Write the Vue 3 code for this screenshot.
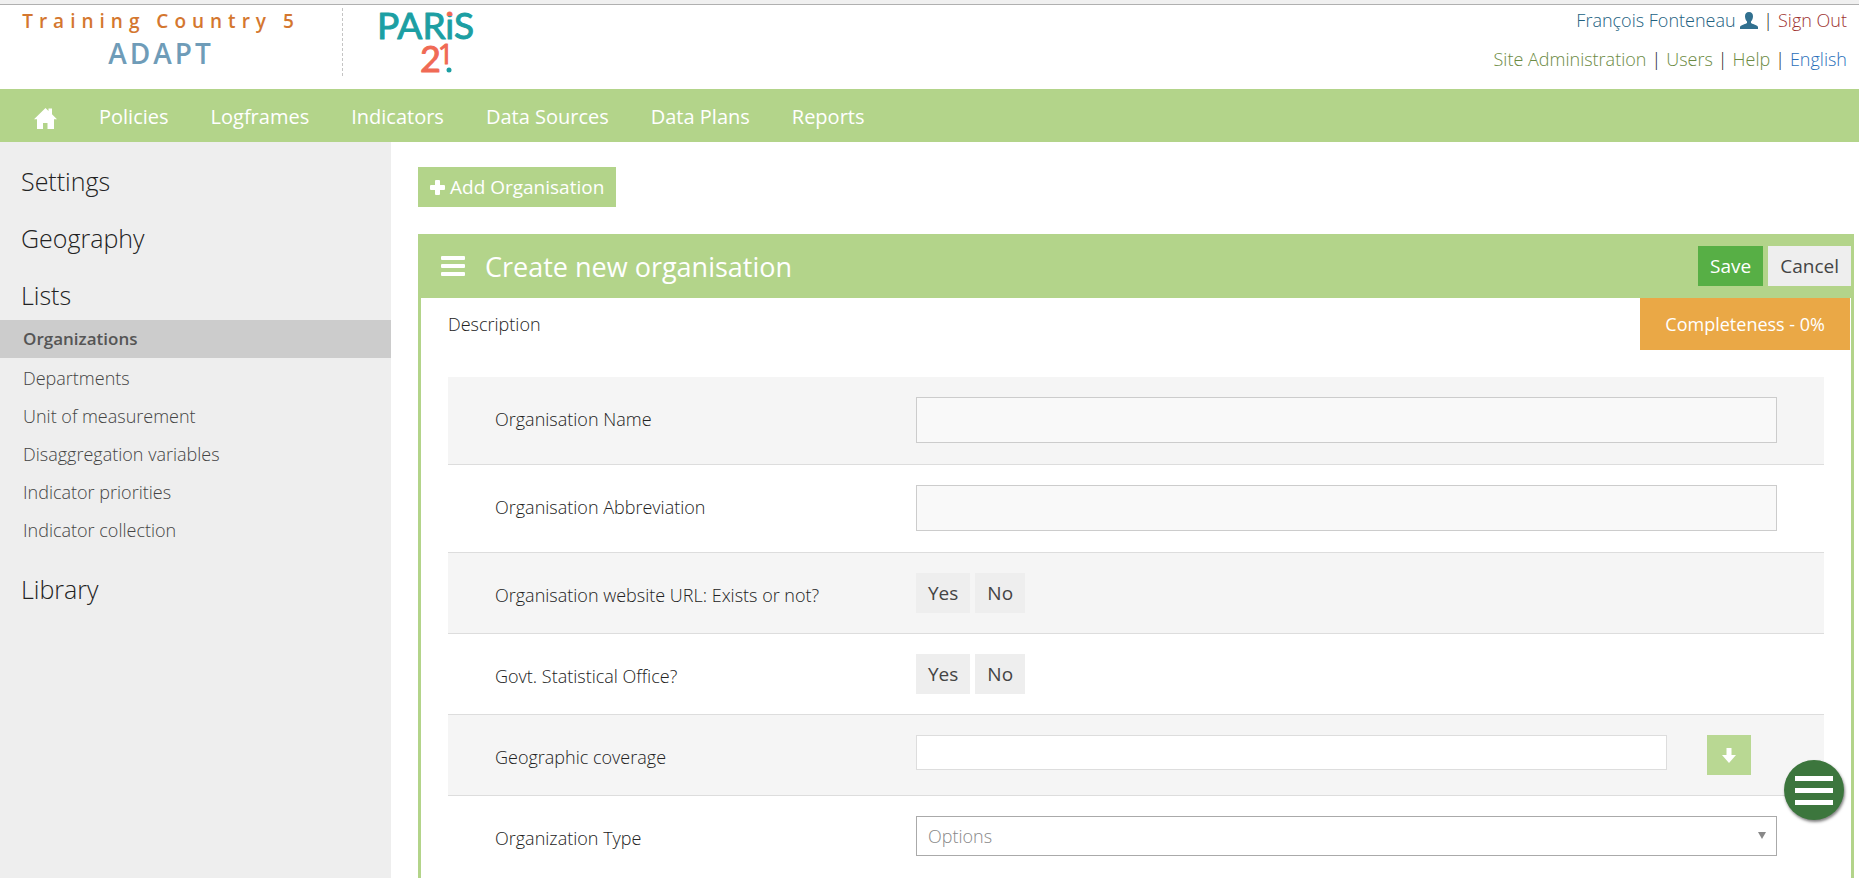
<script setup>
import { ref } from 'vue'

const navItems = ['Policies', 'Logframes', 'Indicators', 'Data Sources', 'Data Plans', 'Reports']
const listItems = [
  'Organizations',
  'Departments',
  'Unit of measurement',
  'Disaggregation variables',
  'Indicator priorities',
  'Indicator collection',
]
const activeItem = 'Organizations'

const organisationName = ref('')
const abbreviation = ref('')
const coverage = ref('')
const organisationType = ref('')
const hasWebsite = ref(null)
const isStatOffice = ref(null)
</script>

<template>
  <div class="page">
    <header class="top">
      <div class="brand">
        <div class="country">Training Country 5</div>
        <div class="product">ADAPT</div>
      </div>
      <a class="logo" href="#" aria-label="PARIS21">
        <svg width="110" height="76" viewBox="0 0 110 76">
          <defs>
            <linearGradient id="letter-dot" gradientUnits="userSpaceOnUse" x1="0" y1="0" x2="0" y2="20">
              <stop offset="0.570" stop-color="#f06a55" />
              <stop offset="0.570" stop-color="#1c9fa3" />
            </linearGradient>
          </defs>
          <text class="teal" x="1" y="34" font-size="37">PAR<tspan class="dotted">i</tspan>S</text>
          <text class="red" x="44" y="67" font-size="36">2</text>
          <text class="red one" x="62" y="59" font-size="27">1</text>
          <circle cx="73" cy="65" r="2.500" fill="#1c9fa3" />
        </svg>
      </a>
      <div class="account">
        <div class="account-line">
          <a class="user" href="#">François Fonteneau
            <svg class="user-icon" width="18" height="17" viewBox="0 0 18 17">
              <path d="M9 0C6.300 0 5 1.800 5 4.300c0 2.200.8 4.200 2 5.200v1.600c-.6 1-6 1.700-7 3.800V17h18v-2.100c-1-2.100-6.400-2.800-7-3.800V9.500c1.200-1 2-3 2-5.200C13 1.800 11.700 0 9 0z" fill="#31708f" />
            </svg></a>
          <span class="bar">|</span>
          <a class="signout" href="#">Sign Out</a>
        </div>
        <div class="account-line">
          <a class="green" href="#">Site Administration</a>
          <span class="bar">|</span>
          <a class="green" href="#">Users</a>
          <span class="bar">|</span>
          <a class="green" href="#">Help</a>
          <span class="bar">|</span>
          <a class="lang" href="#">English</a>
        </div>
      </div>
    </header>

    <nav class="nav">
      <a class="home" href="#" aria-label="Home">
        <svg width="23" height="21" viewBox="0 0 23 21">
          <path d="M11.500 0 0 11.300h3V21h6v-6h4.500v6H20v-9.700h3L18 6.300V0.500h-3.500v2.600z" fill="#fff" />
        </svg>
      </a>
      <a v-for="item in navItems" :key="item" href="#">{{ item }}</a>
    </nav>

    <div class="body">
      <aside class="side">
        <h2><a href="#">Settings</a></h2>
        <h2><a href="#">Geography</a></h2>
        <h2><a href="#">Lists</a></h2>
        <ul>
          <li v-for="item in listItems" :key="item" :class="{ active: item === activeItem }">
            <a href="#">{{ item }}</a>
          </li>
        </ul>
        <h2><a href="#">Library</a></h2>
      </aside>

      <main class="main">
        <button class="btn add" type="button">
          <svg width="15" height="15" viewBox="0 0 15 15">
            <path d="M6 0h3q1 0 1 1v4h4q1 0 1 1v3q0 1-1 1h-4v4q0 1-1 1h-3q-1 0-1-1v-4h-4q-1 0-1-1v-3q0-1 1-1h4v-4q0-1 1-1z" fill="#fff" />
          </svg>
          Add Organisation
        </button>

        <form class="panel" @submit.prevent>
          <div class="panel-head">
            <svg width="24" height="20" viewBox="0 0 24 20">
              <g fill="#fff">
                <rect width="24" height="4" rx="1" />
                <rect y="8" width="24" height="4" rx="1" />
                <rect y="16" width="24" height="4" rx="1" />
              </g>
            </svg>
            <h1>Create new organisation</h1>
            <div class="actions">
              <button class="btn save" type="submit">Save</button>
              <button class="btn" type="button">Cancel</button>
            </div>
          </div>

          <div class="panel-sub">
            <span>Description</span>
            <span class="complete">Completeness - 0%</span>
          </div>

          <div class="rows">
            <div class="row">
              <label class="label" for="org-name">Organisation Name</label>
              <input id="org-name" v-model="organisationName" class="field" type="text" />
            </div>
            <div class="row">
              <label class="label" for="org-abbr">Organisation Abbreviation</label>
              <input id="org-abbr" v-model="abbreviation" class="field" type="text" />
            </div>
            <div class="row">
              <span id="lbl-web" class="label">Organisation website URL: Exists or not?</span>
              <div class="choice" role="group" aria-labelledby="lbl-web">
                <button class="btn" type="button" @click="hasWebsite = true">Yes</button>
                <button class="btn" type="button" @click="hasWebsite = false">No</button>
              </div>
            </div>
            <div class="row">
              <span id="lbl-gov" class="label">Govt. Statistical Office?</span>
              <div class="choice" role="group" aria-labelledby="lbl-gov">
                <button class="btn" type="button" @click="isStatOffice = true">Yes</button>
                <button class="btn" type="button" @click="isStatOffice = false">No</button>
              </div>
            </div>
            <div class="row">
              <label class="label" for="org-geo">Geographic coverage</label>
              <div class="coverage">
                <input id="org-geo" v-model="coverage" type="text" />
                <button class="btn pick" type="button" aria-label="Choose area">
                  <svg width="14" height="15" viewBox="0 0 14 15">
                    <path d="M4.500 0h5v7H14l-7 8-7-8h4.500z" fill="#fff" />
                  </svg>
                </button>
              </div>
            </div>
            <div class="row">
              <label class="label" for="org-type">Organization Type</label>
              <div class="select">
                <select id="org-type" v-model="organisationType">
                  <option value="">Options</option>
                </select>
                <svg width="8" height="7" viewBox="0 0 8 7">
                  <path d="M0 0h8L4 7z" fill="#888" />
                </svg>
              </div>
            </div>
          </div>
        </form>
      </main>
    </div>

    <button class="fab" type="button" aria-label="Menu">
      <span></span><span></span><span></span>
    </button>
  </div>
</template>

<style>
html,
body {
  height: 100%;
  overflow: hidden;
}
#app {
  height: 100%;
}
</style>

<style scoped>
.page {
  box-sizing: border-box;
  display: flex;
  flex-direction: column;
  min-height: 100%;
  border-top: 4px solid #f0f0f0;
  background: #fff;
  color: #222;
  font-family: 'Open Sans', 'Noto Sans', sans-serif;
  font-size: 18px;
  font-weight: 300;
}
.page * {
  box-sizing: border-box;
}
a {
  color: inherit;
  text-decoration: none;
}
button,
input,
select {
  margin: 0;
  border-radius: 0;
  font: inherit;
  color: inherit;
}
h1,
h2,
ul {
  margin: 0;
  padding: 0;
  font-weight: inherit;
  list-style: none;
}

.top {
  display: flex;
  align-items: flex-start;
  height: 85px;
  padding-right: 12px;
  border-top: 1px solid #b0b0b0;
}
.brand {
  width: 343px;
  height: 68px;
  margin-top: 3px;
  padding-right: 20px;
  border-right: 1px dashed #c4c4c4;
  font-weight: 600;
  text-align: center;
}
.country {
  color: #d4772f;
  font-size: 19px;
  line-height: 26px;
  letter-spacing: 6px;
}
.product {
  color: #6f9cb8;
  font-size: 28px;
  line-height: 38px;
  letter-spacing: 3px;
}
.logo {
  margin-left: 33px;
}
.logo svg {
  display: block;
}
.logo text {
  font-family: Lato, sans-serif;
  font-weight: 400;
  stroke-width: 1px;
  stroke-linejoin: round;
}
.logo .one {
  font-family: 'Open Sans', sans-serif;
}
.logo .teal {
  fill: #1c9fa3;
  stroke: #1c9fa3;
}
.logo .red {
  fill: #f06a55;
  stroke: #f06a55;
}
.logo .dotted {
  fill: url(#letter-dot);
  stroke: url(#letter-dot);
}
.account {
  flex: 1;
  padding-top: 2px;
  text-align: right;
}
.account-line {
  height: 39px;
  line-height: 26px;
}
.user {
  color: #22617f;
}
.user-icon {
  vertical-align: -2px;
}
.bar {
  margin: 0 5px;
}
.signout {
  color: #9e3230;
}
.green {
  color: #6b8a42;
}
.lang {
  color: #2a70ba;
}

.nav {
  display: flex;
  align-items: center;
  gap: 42px;
  height: 53px;
  padding: 2px 0 0 34px;
  background: #b3d48a;
  color: #fff;
  font-size: 20px;
  font-weight: 400;
}
.home svg {
  display: block;
  margin-top: 3px;
}

.body {
  display: flex;
  flex: 1;
  align-items: stretch;
}
.side {
  width: 391px;
  flex: none;
  padding-top: 14px;
  background: #eee;
}
.side h2 {
  margin-bottom: 7px;
  padding-left: 21px;
  font-size: 25px;
  line-height: 50px;
}
.side h2:has(+ ul) {
  margin-bottom: 0;
}
.side ul {
  margin-bottom: 15px;
}
.side li {
  padding-left: 23px;
  color: #444;
  line-height: 38px;
}
.side .active {
  margin-bottom: 1px;
  background: #ccc;
  color: #555;
  font-size: 17px;
  font-weight: 600;
}

.main {
  flex: 1;
  display: flex;
  flex-direction: column;
  min-width: 0;
  padding: 25px 5px 0 27px;
}
.btn {
  height: 40px;
  padding: 0 12px;
  border: 0;
  background: #eee;
  color: #444;
  font-size: 19px;
  font-weight: 400;
  line-height: 40px;
}
.add {
  display: flex;
  align-items: center;
  align-self: flex-start;
  gap: 5px;
  background: #b3d48a;
  color: #fff;
}
.panel {
  flex: 1;
  margin-top: 27px;
  border: solid #b3d48a;
  border-width: 0 3px;
}
.panel-head {
  display: flex;
  align-items: center;
  height: 64px;
  padding-left: 20px;
  background: #b3d48a;
  color: #fff;
}
.panel-head h1 {
  margin-left: 20px;
  font-size: 27px;
  font-weight: 400;
}
.actions {
  display: flex;
  gap: 5px;
  margin-left: auto;
}
.save {
  background: #57af45;
  color: #fff;
}
.panel-sub {
  display: flex;
  justify-content: space-between;
  padding: 0 1px 0 27px;
  line-height: 52px;
}
.complete {
  padding: 0 25px;
  background: #eaa846;
  color: #fff;
  font-weight: 400;
}
.rows {
  margin: 27px 27px 0;
}
.row {
  display: grid;
  grid-template-columns: 421fr 861fr;
  align-items: start;
  padding: 20px 47px;
  border-bottom: 1px solid #ddd;
}
.row:nth-child(odd) {
  background: #f5f5f5;
}
.row:last-child {
  border-bottom: 0;
}
.label {
  padding-top: 9px;
  line-height: 26px;
}
.field {
  width: 100%;
  height: 46px;
  margin-bottom: 1px;
  padding: 0 12px;
  border: 1px solid #ccc;
  background: #f9f9f9;
}
.choice {
  display: flex;
  gap: 5px;
}
.coverage {
  display: flex;
  gap: 40px;
  padding-right: 26px;
}
.coverage input {
  flex: 1;
  min-width: 0;
  height: 35px;
  padding: 0 12px;
  border: 1px solid #ddd;
  background: #fff;
}
.pick {
  display: flex;
  align-items: center;
  justify-content: center;
  width: 44px;
  background: #b9d893;
}
.select {
  position: relative;
}
.select select {
  display: block;
  appearance: none;
  width: 100%;
  height: 40px;
  padding: 0 11px;
  border: 1px solid #aaa;
  background: #fff;
  color: #888;
}
.select svg {
  position: absolute;
  top: 16px;
  right: 11px;
  pointer-events: none;
}

.fab {
  position: fixed;
  right: 15px;
  bottom: 58px;
  display: flex;
  flex-direction: column;
  align-items: center;
  justify-content: center;
  gap: 7px;
  width: 60px;
  height: 60px;
  padding: 0;
  border: 0;
  border-radius: 50%;
  background: #3c763d;
  box-shadow: 1px 2px 3px rgba(0, 0, 0, 0.5);
}
.fab span {
  width: 38px;
  height: 5px;
  background: #fff;
}
</style>
